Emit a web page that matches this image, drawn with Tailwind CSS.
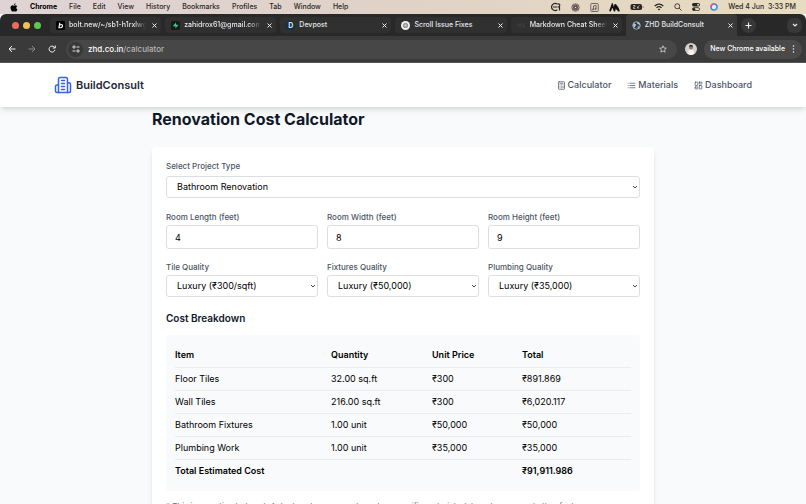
<!DOCTYPE html>
<html lang="en">
<head>
    <meta charset="UTF-8">
    <meta name="viewport" content="width=device-width, initial-scale=1.0">
    <title>ZHD BuildConsult</title>
    <script src="https://cdn.jsdelivr.net/npm/@tailwindcss/browser@4"></script>
</head>
<body class="h-screen overflow-hidden flex flex-col bg-gray-50 font-['Inter','Noto_Sans',sans-serif] text-gray-900">

    <!-- Menu bar -->
    <div class="h-[14px] shrink-0 flex items-center justify-between px-[10px] bg-linear-to-r from-[#dfd3d5] via-[#e0d2c6] to-[#e8dcc0] text-[7px] leading-[10px] font-medium text-[#2a2624]">
        <div class="flex items-center gap-3">
            <svg class="w-2 h-[9px] shrink-0" viewBox="0 0 16 19" fill="#000"><path d="M11.2 4.8c-1.300 0-2.100.8-3 .8-.9 0-2-.8-3.300-.8C2.500 4.800.6 6.900.6 10.200c0 3.900 2.600 8 4.700 8 1.100 0 1.600-.7 3-.7s1.700.7 2.900.7c1.700 0 3.300-2.400 4-4.500-1.600-.7-2.400-2-2.400-3.600 0-1.500.7-2.700 2-3.500-.9-1.200-2.200-1.800-3.600-1.800zM11.300.6C9.400.8 7.900 2.500 8 4.400c1.900 0 3.400-1.800 3.300-3.800z"/></svg>
            <span class="font-bold text-black">Chrome</span>
            <span>File</span>
            <span>Edit</span>
            <span>View</span>
            <span>History</span>
            <span>Bookmarks</span>
            <span>Profiles</span>
            <span>Tab</span>
            <span>Window</span>
            <span>Help</span>
        </div>
        <div class="flex items-center gap-[10px]">
            <svg class="w-[10px] h-[10px]" viewBox="0 0 20 20" fill="none" stroke="#2a2624" stroke-width="2.400"><path d="M12.500 15.500A7 7 0 1 1 12 4M4 10h8M12.500 4.500c3-2 5.500-.5 5 2.500-.3 2-2.500 3-4.500 3M17 9v8"/></svg>
            <svg class="w-[9px] h-[9px]" viewBox="0 0 18 18" fill="none" stroke="#4a4440" stroke-width="1.400"><circle cx="9" cy="9" r="7.500"/><circle cx="9" cy="9" r="2"/><ellipse cx="9" cy="9" rx="3" ry="6"/><ellipse cx="9" cy="9" rx="3" ry="6" transform="rotate(60 9 9)"/><ellipse cx="9" cy="9" rx="3" ry="6" transform="rotate(120 9 9)"/></svg>
            <svg class="w-[9px] h-[9px]" viewBox="0 0 18 18" fill="none" stroke="#4a4440" stroke-width="1.500"><rect x="1.500" y="1" width="15" height="16" rx="2"/><path d="M7 13V6l5-1.500V12"/><circle cx="5.800" cy="13" r="1.300"/><circle cx="10.800" cy="12" r="1.300"/></svg>
            <svg class="w-[11px] h-[9px]" viewBox="0 0 22 18" fill="none" stroke="#111" stroke-width="3.800" stroke-linecap="round"><path d="M2.500 15 6.500 4l4.500 11M11 15l1-8 7.500 8M13 4l5 7"/></svg>
            <svg class="w-[14px] h-[8px]" viewBox="0 0 28 16"><rect x="1" y="2" width="23" height="12" rx="3.500" fill="#2a2624"/><path d="M25.500 6v4c2-.5 2-3.500 0-4z" fill="#2a2624"/><path d="M6 5h4v3H7v3h4M19 5l-5 4h3l-1 3" stroke="#e5d9c4" stroke-width="1.300" fill="none"/></svg>
            <svg class="w-[10px] h-[8px]" viewBox="0 0 20 16" fill="none" stroke="#2a2624" stroke-width="2.600"><path d="M1.500 6c5-5 12-5 17 0M5 9.800c3-3 7-3 10 0"/><path d="m7.500 12.500 2.500 2.700 2.500-2.700c-1.500-1.300-3.500-1.300-5 0z" fill="#2a2624" stroke="none"/></svg>
            <svg class="w-2 h-2" viewBox="0 0 16 16" fill="none" stroke="#2a2624" stroke-width="1.700"><circle cx="6.500" cy="6.500" r="5"/><path d="m10.200 10.200 4.800 4.800"/></svg>
            <svg class="w-2 h-2" viewBox="0 0 16 16"><rect x="0" y="0" width="16" height="7" rx="3.500" fill="#2a2624"/><circle cx="12.300" cy="3.500" r="2" fill="#e5d9c4"/><rect x=".8" y="9.300" width="14.400" height="6" rx="3" fill="none" stroke="#2a2624" stroke-width="1.600"/><circle cx="4" cy="12.300" r="2.500" fill="#2a2624"/></svg>
            <svg class="w-2 h-2" viewBox="0 0 16 16"><circle cx="8" cy="8" r="6" fill="#dff1fb" stroke="#4a7fe0" stroke-width="3"/><path d="M2 8a6 6 0 0 1 6-6" stroke="#e0598f" stroke-width="3" fill="none"/><path d="M8 14a6 6 0 0 0 5.500-4" stroke="#48b5c9" stroke-width="3" fill="none"/></svg>
            <span class="whitespace-pre">Wed 4 Jun  3:33 PM</span>
        </div>
    </div>

    <!-- Tab strip -->
    <div class="h-[22px] shrink-0 flex items-center pl-3 pr-1 bg-[#282828] text-[7px] leading-[10px] font-medium text-gray-200 rounded-t-md">
        <div class="flex gap-1 w-[38px] shrink-0">
            <span class="size-[7px] rounded-full bg-[#ec6a5e]"></span>
            <span class="size-[7px] rounded-full bg-[#f4bf4f]"></span>
            <span class="size-[7px] rounded-full bg-[#61c554]"></span>
        </div>
        <div class="flex-1 min-w-0 grid grid-cols-6 gap-1">
            <div class="h-4 min-w-0 flex items-center gap-1 pl-[6px] pr-[2px] rounded bg-[#303030]">
                <svg class="size-[9px] shrink-0" viewBox="0 0 18 18"><rect width="18" height="18" rx="3" fill="#000"/><path d="M7.500 3.500 6 13.500h3.500c4 0 5-6.500 1-6.500-1 0-2 .5-2.800 1.300" stroke="#fff" stroke-width="2.400" fill="none"/></svg>
                <span class="flex-1 min-w-0 overflow-hidden whitespace-nowrap mask-r-from-85%">bolt.new/~/sb1-h1rxlwg</span>
                <button class="p-[2px] shrink-0" aria-label="Close tab"><svg class="size-[5px]" viewBox="0 0 10 10" stroke="#eee" stroke-width="2"><path d="m1 1 8 8M9 1 1 9"/></svg></button>
            </div>
            <div class="h-4 min-w-0 flex items-center gap-1 pl-[6px] pr-[2px] rounded bg-[#303030]">
                <svg class="size-[9px] shrink-0" viewBox="0 0 18 18"><rect width="18" height="18" rx="3" fill="#151b18"/><path d="M10 3 3.500 10.500H9V15l6-7.500H10z" fill="#3ecf8e"/></svg>
                <span class="flex-1 min-w-0 overflow-hidden whitespace-nowrap mask-r-from-85%">zahidrox61@gmail.com'</span>
                <button class="p-[2px] shrink-0" aria-label="Close tab"><svg class="size-[5px]" viewBox="0 0 10 10" stroke="#eee" stroke-width="2"><path d="m1 1 8 8M9 1 1 9"/></svg></button>
            </div>
            <div class="h-4 min-w-0 flex items-center gap-1 pl-[6px] pr-[2px] rounded bg-[#303030]">
                <span class="size-[9px] shrink-0 rounded-full bg-[#123044] text-[#cfe9f7] text-center leading-[9px] font-bold">D</span>
                <span class="flex-1 min-w-0 overflow-hidden whitespace-nowrap">Devpost</span>
                <button class="p-[2px] shrink-0" aria-label="Close tab"><svg class="size-[5px]" viewBox="0 0 10 10" stroke="#eee" stroke-width="2"><path d="m1 1 8 8M9 1 1 9"/></svg></button>
            </div>
            <div class="h-4 min-w-0 flex items-center gap-1 pl-[6px] pr-[2px] rounded bg-[#303030]">
                <svg class="size-[9px] shrink-0" viewBox="0 0 18 18"><circle cx="9" cy="9" r="9" fill="#f3f3f3"/><circle cx="9" cy="9" r="4.500" fill="#aaa" stroke="#777" stroke-width="1.500"/><circle cx="9" cy="9" r="1.500" fill="#ddd"/></svg>
                <span class="flex-1 min-w-0 overflow-hidden whitespace-nowrap">Scroll Issue Fixes</span>
                <button class="p-[2px] shrink-0" aria-label="Close tab"><svg class="size-[5px]" viewBox="0 0 10 10" stroke="#eee" stroke-width="2"><path d="m1 1 8 8M9 1 1 9"/></svg></button>
            </div>
            <div class="h-4 min-w-0 flex items-center gap-1 pl-[6px] pr-[2px] rounded bg-[#303030]">
                <svg class="size-[9px] shrink-0" viewBox="0 0 18 18" fill="none" stroke="#3e3e3e" stroke-width="2"><path d="M2 13V5l3 4 3-4v8M13 5v7M10.500 10l2.500 3 2.500-3"/></svg>
                <span class="flex-1 min-w-0 overflow-hidden whitespace-nowrap mask-r-from-85%">Markdown Cheat Sheet</span>
                <button class="p-[2px] shrink-0" aria-label="Close tab"><svg class="size-[5px]" viewBox="0 0 10 10" stroke="#eee" stroke-width="2"><path d="m1 1 8 8M9 1 1 9"/></svg></button>
            </div>
            <div class="h-[22px] -my-[3px] min-w-0 flex items-center gap-1 pl-[6px] pr-[2px] rounded-t bg-[#3a3a3a]">
                <svg class="size-[9px] shrink-0" viewBox="0 0 18 18"><circle cx="9" cy="9" r="7.500" fill="#35404a" stroke="#b9c8d6" stroke-width="1.600"/><path d="M3 5c3 0 5 1 5 3s-2 1.500-2 3.500-1 2-2.500.5L2 8zM10 3c0 3 2 3 3 3s0 3 3 3l-1-4-3-2.500zM11 11h4l-3 4.500z" fill="#b9c8d6"/></svg>
                <span class="flex-1 min-w-0 overflow-hidden whitespace-nowrap">ZHD BuildConsult</span>
                <button class="p-[2px] shrink-0" aria-label="Close tab"><svg class="size-[5px]" viewBox="0 0 10 10" stroke="#eee" stroke-width="2"><path d="m1 1 8 8M9 1 1 9"/></svg></button>
            </div>
        </div>
        <button class="ml-1 size-[15px] shrink-0 rounded-full bg-[#383838] grid place-items-center" aria-label="New tab"><svg class="size-[7px]" viewBox="0 0 14 14" stroke="#eee" stroke-width="2.200"><path d="M7 1v12M1 7h12"/></svg></button>
        <button class="ml-[31px] size-[15px] shrink-0 rounded-md bg-[#383838] grid place-items-center" aria-label="Search tabs"><svg class="size-[6px]" viewBox="0 0 12 12" fill="none" stroke="#eee" stroke-width="2.200"><path d="m2 4 4 4 4-4"/></svg></button>
    </div>

    <!-- Toolbar -->
    <div class="h-[27px] shrink-0 flex items-center pl-2 pr-1 bg-[#3a3a3a] border-b border-[#555]">
        <div class="flex items-center gap-3 mr-[10px]">
            <button aria-label="Back"><svg class="size-2" viewBox="0 0 16 16" fill="none" stroke="#eee" stroke-width="2"><path d="M15 8H2M8 2 2 8l6 6"/></svg></button>
            <button aria-label="Forward"><svg class="size-2" viewBox="0 0 16 16" fill="none" stroke="#8a8a8a" stroke-width="2"><path d="M1 8h13M8 2l6 6-6 6"/></svg></button>
            <button aria-label="Reload"><svg class="size-2" viewBox="0 0 16 16" fill="none" stroke="#eee" stroke-width="2"><path d="M14 9.500A6 6 0 1 1 12.500 4L14 5.500M14.500 1v5h-5"/></svg></button>
        </div>
        <div class="h-[19px] flex-1 min-w-0 flex items-center gap-[5px] pl-[2px] pr-[10px] rounded-full bg-[#474747]">
            <span class="size-[15px] shrink-0 rounded-full bg-[#383838] grid place-items-center"><svg class="size-2" viewBox="0 0 16 16" fill="none" stroke="#e5e5e5" stroke-width="1.900"><circle cx="4" cy="4" r="2.300"/><path d="M9 4h6M1 12h6"/><circle cx="12" cy="12" r="2.300"/></svg></span>
            <div class="flex-1 text-[8px] leading-3 font-medium text-white">zhd.co.in<span class="text-[#b5b5b5]">/calculator</span></div>
            <button aria-label="Bookmark this tab"><svg class="size-2" viewBox="0 0 16 16" fill="none" stroke="#ddd" stroke-width="1.500"><path d="m8 1.500 2 4.500 4.800.4-3.700 3.200 1.200 4.800L8 11.800l-4.300 2.600 1.200-4.800L1.200 6.400 6 6z"/></svg></button>
        </div>
        <svg class="ml-2 mr-[7px] size-3 shrink-0" viewBox="0 0 24 24"><circle cx="12" cy="12" r="12" fill="#d4d2ce"/><path d="M6 22c0-7 2-9 6-9s6 2 6 9c-3.500 2.500-8.500 2.500-12 0z" fill="#f5f5f3"/><circle cx="12" cy="9" r="4" fill="#8d7566"/><path d="M8 8c0-6 8-6 8 0-2-2-6-2-8 0z" fill="#222"/></svg>
        <button class="h-[19px] shrink-0 flex items-center gap-[7px] pl-[6px] pr-[7px] rounded-full bg-[#4a4a4a] text-[7px] leading-[10px] font-medium text-white">
            New Chrome available
            <svg class="w-[3px] h-2" viewBox="0 0 6 16" fill="#eee"><circle cx="3" cy="2" r="1.600"/><circle cx="3" cy="8" r="1.600"/><circle cx="3" cy="14" r="1.600"/></svg>
        </button>
    </div>

    <!-- Site navigation -->
    <nav class="relative h-11 shrink-0 px-[54px] flex items-center justify-between bg-white shadow-md">
        <a href="/" class="flex items-center gap-1 text-[11px] leading-4 font-semibold text-gray-800">
            <svg class="size-[18px]" viewBox="0 0 24 24" fill="none" stroke="#3563e0" stroke-width="2" stroke-linecap="round" stroke-linejoin="round"><path d="M6 22V4a2 2 0 0 1 2-2h8a2 2 0 0 1 2 2v18Z"/><path d="M6 12H4a2 2 0 0 0-2 2v6a2 2 0 0 0 2 2h2M18 9h2a2 2 0 0 1 2 2v9a2 2 0 0 1-2 2h-2M10 6h4M10 10h4M10 14h4M10 18h4"/></svg>
            BuildConsult
        </a>
        <div class="flex items-center gap-4 text-[9px] leading-3 font-medium text-gray-600">
            <a href="/calculator" class="flex items-center gap-[2px]">
                <svg class="size-[9px]" viewBox="0 0 24 24" fill="none" stroke="currentColor" stroke-width="2" stroke-linecap="round" stroke-linejoin="round"><rect width="16" height="20" x="4" y="2" rx="2"/><path d="M8 6h8M16 14v4M16 10h.01M12 10h.01M8 10h.01M12 14h.01M8 14h.01M12 18h.01M8 18h.01"/></svg>
                Calculator
            </a>
            <a href="/materials" class="flex items-center gap-[2px]">
                <svg class="size-[9px]" viewBox="0 0 24 24" fill="none" stroke="currentColor" stroke-width="2" stroke-linecap="round" stroke-linejoin="round"><path d="M8 6h13M8 12h13M8 18h13M3 6h.01M3 12h.01M3 18h.01"/></svg>
                Materials
            </a>
            <a href="/dashboard" class="flex items-center gap-[2px]">
                <svg class="size-[9px]" viewBox="0 0 24 24" fill="none" stroke="currentColor" stroke-width="2" stroke-linecap="round" stroke-linejoin="round"><rect width="7" height="9" x="3" y="3" rx="1"/><rect width="7" height="5" x="14" y="3" rx="1"/><rect width="7" height="9" x="14" y="12" rx="1"/><rect width="7" height="5" x="3" y="16" rx="1"/></svg>
                Dashboard
            </a>
        </div>
    </nav>

    <main class="w-full max-w-[502px] mx-auto pt-[2px]">
        <h1 class="text-[16px] leading-5 font-bold mb-[18px]">Renovation Cost Calculator</h1>

        <div class="bg-white rounded shadow-md px-[14px] py-[13px]">
            <div class="mb-[13px]">
                <label for="project-type" class="block mb-1 text-[8px] leading-3 font-medium text-gray-600">Select Project Type</label>
                <div class="grid items-center">
                    <select id="project-type" class="col-start-1 row-start-1 appearance-none w-full h-[22px] pl-[10px] pr-4 rounded-[3px] border border-[#dcdee2] bg-white text-[9px] leading-3 text-black">
                        <option>Bathroom Renovation</option>
                        <option>Kitchen Renovation</option>
                    </select>
                    <svg class="col-start-1 row-start-1 justify-self-end mr-[2px] size-[6px] pointer-events-none" viewBox="0 0 12 12" fill="none" stroke="#333" stroke-width="1.800"><path d="m2 4 4 4 4-4"/></svg>
                </div>
            </div>

            <!-- Room dimensions -->
            <div class="grid grid-cols-3 gap-[9px] mb-3">
                <div>
                    <label for="length" class="block mb-[2px] text-[8px] leading-3 font-medium text-gray-600">Room Length (feet)</label>
                    <input id="length" type="text" inputmode="numeric" value="4" class="block w-full h-6 px-2 rounded-[3px] border border-[#dcdee2] text-[9px] leading-3 text-black">
                </div>
                <div>
                    <label for="width" class="block mb-[2px] text-[8px] leading-3 font-medium text-gray-600">Room Width (feet)</label>
                    <input id="width" type="text" inputmode="numeric" value="8" class="block w-full h-6 px-2 rounded-[3px] border border-[#dcdee2] text-[9px] leading-3 text-black">
                </div>
                <div>
                    <label for="height" class="block mb-[2px] text-[8px] leading-3 font-medium text-gray-600">Room Height (feet)</label>
                    <input id="height" type="text" inputmode="numeric" value="9" class="block w-full h-6 px-2 rounded-[3px] border border-[#dcdee2] text-[9px] leading-3 text-black">
                </div>
            </div>

            <!-- Quality options -->
            <div class="grid grid-cols-3 gap-[9px] mb-[13px]">
                <div>
                    <label for="tile" class="block mb-[2px] text-[8px] leading-3 font-medium text-gray-600">Tile Quality</label>
                    <div class="grid items-center">
                        <select id="tile" class="col-start-1 row-start-1 appearance-none w-full h-[22px] pl-[10px] pr-4 rounded-[3px] border border-[#dcdee2] bg-white text-[9px] leading-3 text-black">
                            <option>Luxury (₹300/sqft)</option>
                        </select>
                        <svg class="col-start-1 row-start-1 justify-self-end mr-[2px] size-[6px] pointer-events-none" viewBox="0 0 12 12" fill="none" stroke="#333" stroke-width="1.800"><path d="m2 4 4 4 4-4"/></svg>
                    </div>
                </div>
                <div>
                    <label for="fixtures" class="block mb-[2px] text-[8px] leading-3 font-medium text-gray-600">Fixtures Quality</label>
                    <div class="grid items-center">
                        <select id="fixtures" class="col-start-1 row-start-1 appearance-none w-full h-[22px] pl-[10px] pr-4 rounded-[3px] border border-[#dcdee2] bg-white text-[9px] leading-3 text-black">
                            <option>Luxury (₹50,000)</option>
                        </select>
                        <svg class="col-start-1 row-start-1 justify-self-end mr-[2px] size-[6px] pointer-events-none" viewBox="0 0 12 12" fill="none" stroke="#333" stroke-width="1.800"><path d="m2 4 4 4 4-4"/></svg>
                    </div>
                </div>
                <div>
                    <label for="plumbing" class="block mb-[2px] text-[8px] leading-3 font-medium text-gray-600">Plumbing Quality</label>
                    <div class="grid items-center">
                        <select id="plumbing" class="col-start-1 row-start-1 appearance-none w-full h-[22px] pl-[10px] pr-4 rounded-[3px] border border-[#dcdee2] bg-white text-[9px] leading-3 text-black">
                            <option>Luxury (₹35,000)</option>
                        </select>
                        <svg class="col-start-1 row-start-1 justify-self-end mr-[2px] size-[6px] pointer-events-none" viewBox="0 0 12 12" fill="none" stroke="#333" stroke-width="1.800"><path d="m2 4 4 4 4-4"/></svg>
                    </div>
                </div>
            </div>

            <h2 class="text-[10px] leading-4 font-semibold mb-[9px]">Cost Breakdown</h2>
            <div class="bg-gray-50 rounded p-[9px] mb-[9px]">
                <table class="w-full table-fixed text-left text-[9px] leading-3 text-black">
                    <thead>
                        <tr class="h-[23px] border-b border-[#eaecef]">
                            <th class="w-[156px] font-semibold">Item</th>
                            <th class="w-[101px] font-semibold">Quantity</th>
                            <th class="w-[90px] font-semibold">Unit Price</th>
                            <th class="font-semibold">Total</th>
                        </tr>
                    </thead>
                    <tbody>
                        <tr class="h-[23px] border-b border-[#eaecef]">
                            <td>Floor Tiles</td>
                            <td>32.00 sq.ft</td>
                            <td>₹300</td>
                            <td>₹891.869</td>
                        </tr>
                        <tr class="h-[23px] border-b border-[#eaecef]">
                            <td>Wall Tiles</td>
                            <td>216.00 sq.ft</td>
                            <td>₹300</td>
                            <td>₹6,020.117</td>
                        </tr>
                        <tr class="h-[23px] border-b border-[#eaecef]">
                            <td>Bathroom Fixtures</td>
                            <td>1.00 unit</td>
                            <td>₹50,000</td>
                            <td>₹50,000</td>
                        </tr>
                        <tr class="h-[23px] border-b border-[#eaecef]">
                            <td>Plumbing Work</td>
                            <td>1.00 unit</td>
                            <td>₹35,000</td>
                            <td>₹35,000</td>
                        </tr>
                        <tr class="h-[23px] font-semibold">
                            <td colspan="3">Total Estimated Cost</td>
                            <td>₹91,911.986</td>
                        </tr>
                    </tbody>
                </table>
            </div>
            <p class="text-[8px] leading-3 text-gray-500">* This is an estimated cost. Actual costs may vary based on specific materials, labor charges, and other factors.</p>
        </div>
    </main>
</body>
</html>
